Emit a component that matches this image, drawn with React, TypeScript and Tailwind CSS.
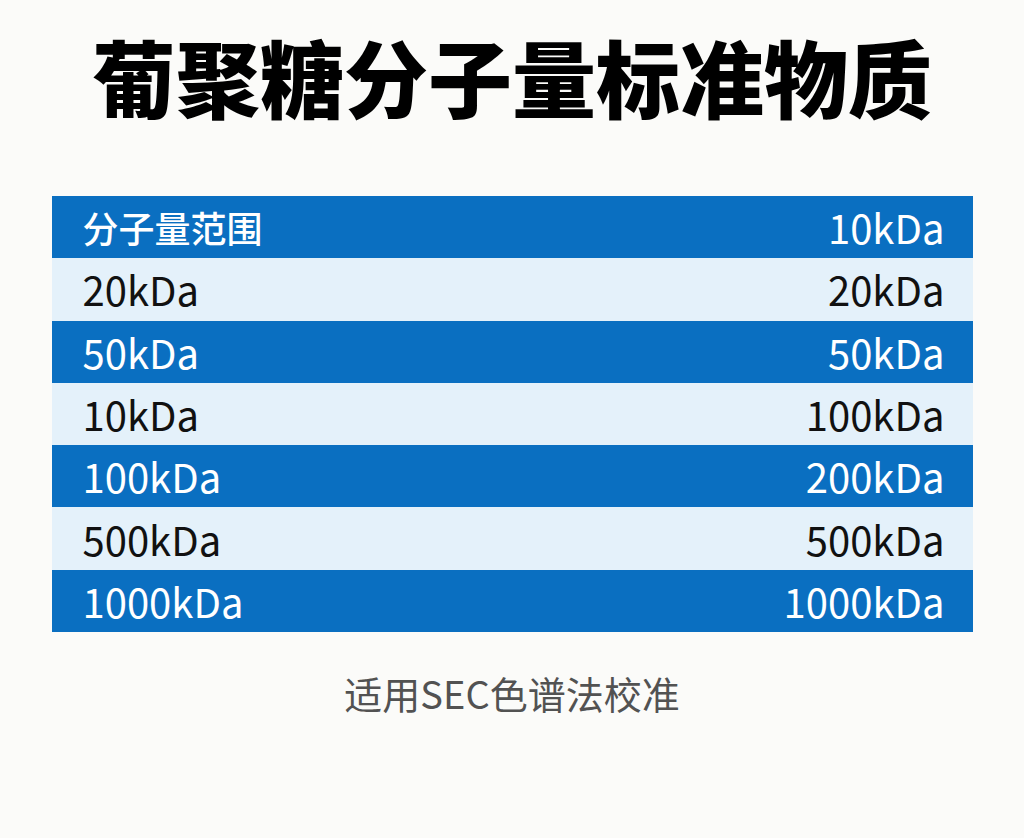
const rows = [
  ["分子量范围", "10kDa"],
  ["20kDa", "20kDa"],
  ["50kDa", "50kDa"],
  ["10kDa", "100kDa"],
  ["100kDa", "200kDa"],
  ["500kDa", "500kDa"],
  ["1000kDa", "1000kDa"],
]

const App = () => {
  return (
    <div className="w-[1024px] h-[838px] bg-[#fbfbf9] flex flex-col items-center font-['Noto_Sans_CJK_SC',sans-serif]">
      <h1 className="mt-[16px] h-[120px] flex items-center text-[84px] font-black text-black leading-none">
        葡聚糖分子量标准物质
      </h1>
      <div className="mt-[60px] w-[921px] flex flex-col">
        {rows.map(([left, right], i) => (
          <div
            key={i}
            className={`h-[62.3px] flex items-center justify-between pl-[31px] pr-[28px] ${
              i % 2 == 0 ? "bg-[#0a6fc1] text-white" : "bg-[#e4f1fa] text-[#111]"
            }`}
          >
            {i == 0 ? (
              <span className="text-[36px] leading-none font-medium">{left}</span>
            ) : (
              <span className="text-[40px] leading-none">{left}</span>
            )}
            <span className="text-[40px] leading-none">{right}</span>
          </div>
        ))}
      </div>
      <p className="mt-[42px] text-[38px] text-[#525252] leading-none">适用SEC色谱法校准</p>
    </div>
  )
}

export default App
